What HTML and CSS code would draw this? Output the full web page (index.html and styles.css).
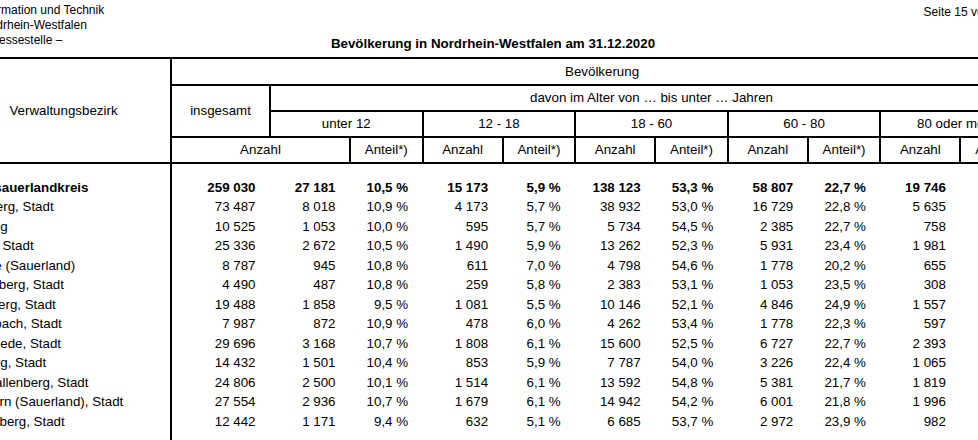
FILE: index.html
```html
<!DOCTYPE html>
<html lang="de">
  <head>
    <meta charset="UTF-8" />
    <meta name="viewport" content="width=device-width, initial-scale=1.0" />
    <title>Bevölkerung in Nordrhein-Westfalen am 31.12.2020</title>
    <link rel="stylesheet" href="styles.css">
  </head>
  <body>
    <div class="sheet">
      <div class="doc-head">
        <div class="org">
          Information und Technik<br />
          Nordrhein-Westfalen<br />
          – Pressestelle –
        </div>
        <h2 class="title">Bevölkerung in Nordrhein-Westfalen am 31.12.2020</h2>
        <div class="page-no">Seite 15 von 33</div>
      </div>

      <table class="pop">
        <colgroup>
          <col class="c-name" />
          <col class="c-total" />
          <col class="c-num" /><col class="c-pct" />
          <col class="c-num" /><col class="c-pct" />
          <col class="c-num" /><col class="c-pct" />
          <col class="c-num" /><col class="c-pct" />
          <col class="c-num" /><col class="c-pct" />
        </colgroup>
        <thead>
          <tr class="h1">
            <th rowspan="4">Verwaltungsbezirk</th>
            <th colspan="11">Bevölkerung</th>
          </tr>
          <tr class="h2">
            <th rowspan="2">insgesamt</th>
            <th colspan="10">davon im Alter von … bis unter … Jahren</th>
          </tr>
          <tr class="h3">
            <th colspan="2">unter 12</th>
            <th colspan="2">12 - 18</th>
            <th colspan="2">18 - 60</th>
            <th colspan="2">60 - 80</th>
            <th colspan="2">80 oder mehr</th>
          </tr>
          <tr class="h4">
            <th colspan="2">Anzahl</th>
            <th>Anteil*)</th>
            <th>Anzahl</th>
            <th>Anteil*)</th>
            <th>Anzahl</th>
            <th>Anteil*)</th>
            <th>Anzahl</th>
            <th>Anteil*)</th>
            <th>Anzahl</th>
            <th>Anteil*)</th>
          </tr>
        </thead>
        <tbody id="rows">
          <tr class="gap"><td></td><td colspan="11"></td></tr>
        </tbody>
      </table>
    </div>

    <script>
      const districts = [
        ["Hochsauerlandkreis", "259 030", "27 181", "10,5 %", "15 173", "5,9 %", "138 123", "53,3 %", "58 807", "22,7 %", "19 746", "7,6 %"],
        ["Arnsberg, Stadt", "73 487", "8 018", "10,9 %", "4 173", "5,7 %", "38 932", "53,0 %", "16 729", "22,8 %", "5 635", "7,7 %"],
        ["Bestwig", "10 525", "1 053", "10,0 %", "595", "5,7 %", "5 734", "54,5 %", "2 385", "22,7 %", "758", "7,2 %"],
        ["Brilon, Stadt", "25 336", "2 672", "10,5 %", "1 490", "5,9 %", "13 262", "52,3 %", "5 931", "23,4 %", "1 981", "7,8 %"],
        ["Eslohe (Sauerland)", "8 787", "945", "10,8 %", "611", "7,0 %", "4 798", "54,6 %", "1 778", "20,2 %", "655", "7,5 %"],
        ["Hallenberg, Stadt", "4 490", "487", "10,8 %", "259", "5,8 %", "2 383", "53,1 %", "1 053", "23,5 %", "308", "6,9 %"],
        ["Marsberg, Stadt", "19 488", "1 858", "9,5 %", "1 081", "5,5 %", "10 146", "52,1 %", "4 846", "24,9 %", "1 557", "8,0 %"],
        ["Medebach, Stadt", "7 987", "872", "10,9 %", "478", "6,0 %", "4 262", "53,4 %", "1 778", "22,3 %", "597", "7,5 %"],
        ["Meschede, Stadt", "29 696", "3 168", "10,7 %", "1 808", "6,1 %", "15 600", "52,5 %", "6 727", "22,7 %", "2 393", "8,1 %"],
        ["Olsberg, Stadt", "14 432", "1 501", "10,4 %", "853", "5,9 %", "7 787", "54,0 %", "3 226", "22,4 %", "1 065", "7,4 %"],
        ["Schmallenberg, Stadt", "24 806", "2 500", "10,1 %", "1 514", "6,1 %", "13 592", "54,8 %", "5 381", "21,7 %", "1 819", "7,3 %"],
        ["Sundern (Sauerland), Stadt", "27 554", "2 936", "10,7 %", "1 679", "6,1 %", "14 942", "54,2 %", "6 001", "21,8 %", "1 996", "7,2 %"],
        ["Winterberg, Stadt", "12 442", "1 171", "9,4 %", "632", "5,1 %", "6 685", "53,7 %", "2 972", "23,9 %", "982", "7,9 %"],
      ];

      const tbody = document.getElementById("rows");
      districts.forEach((row, i) => {
        const tr = document.createElement("tr");
        if (i === 0) tr.classList.add("kreis");
        tr.innerHTML = row
          .map((cell, j) => `<td class="${j === 0 ? "name" : "val"}">${cell}</td>`)
          .join("");
        tbody.appendChild(tr);
      });
      const tail = document.createElement("tr");
      tail.classList.add("gap");
      tail.innerHTML = `<td></td><td colspan="11"></td>`;
      tbody.appendChild(tail);
    </script>
  </body>
</html>
```

FILE: styles.css
```css
html,
body {
  margin: 0;
  padding: 0;
  overflow: hidden;
  background-color: #fff;
}

body {
  font-family: "Liberation Sans", Arial, sans-serif;
  color: #000;
}

.sheet {
  width: 1076px;
  margin-left: -45px;
}

.doc-head {
  display: grid;
  grid-template-columns: 1fr auto 1fr;
  font-size: 12px;
  line-height: 15px;
}

.org {
  padding: 3px 0 0 22px;
}

.page-no {
  padding: 5px 24px 0 0;
  text-align: right;
}

.title {
  align-self: end;
  margin: 0 0 -4px;
  font-size: 13.33px;
  line-height: 16px;
  font-weight: bold;
}

.pop {
  width: 1076px;
  margin-top: 9px;
  table-layout: fixed;
  border-collapse: collapse;
  font-size: 13.33px;
}

.c-name { width: 215px; }
.c-total { width: 99px; }
.c-num { width: 80px; }
.c-pct { width: 72.6px; }

.pop th {
  border: 2px solid #000;
  font-weight: normal;
  padding: 0;
  line-height: 16px;
}

.h1 th { height: 25px; }
.h2 th { height: 24px; }
.h3 th { height: 24px; }
.h4 th { height: 24px; }

.pop td {
  padding: 0;
  height: 19.5px;
  line-height: 16px;
}

.pop td:first-child {
  border-right: 2px solid #000;
}

.pop .gap td {
  height: 13.8px;
}

.pop td.name {
  padding-left: 5px;
  white-space: nowrap;
}

.pop td.val {
  text-align: right;
  padding-right: 14.5px;
}

.kreis td {
  font-weight: bold;
}
```
